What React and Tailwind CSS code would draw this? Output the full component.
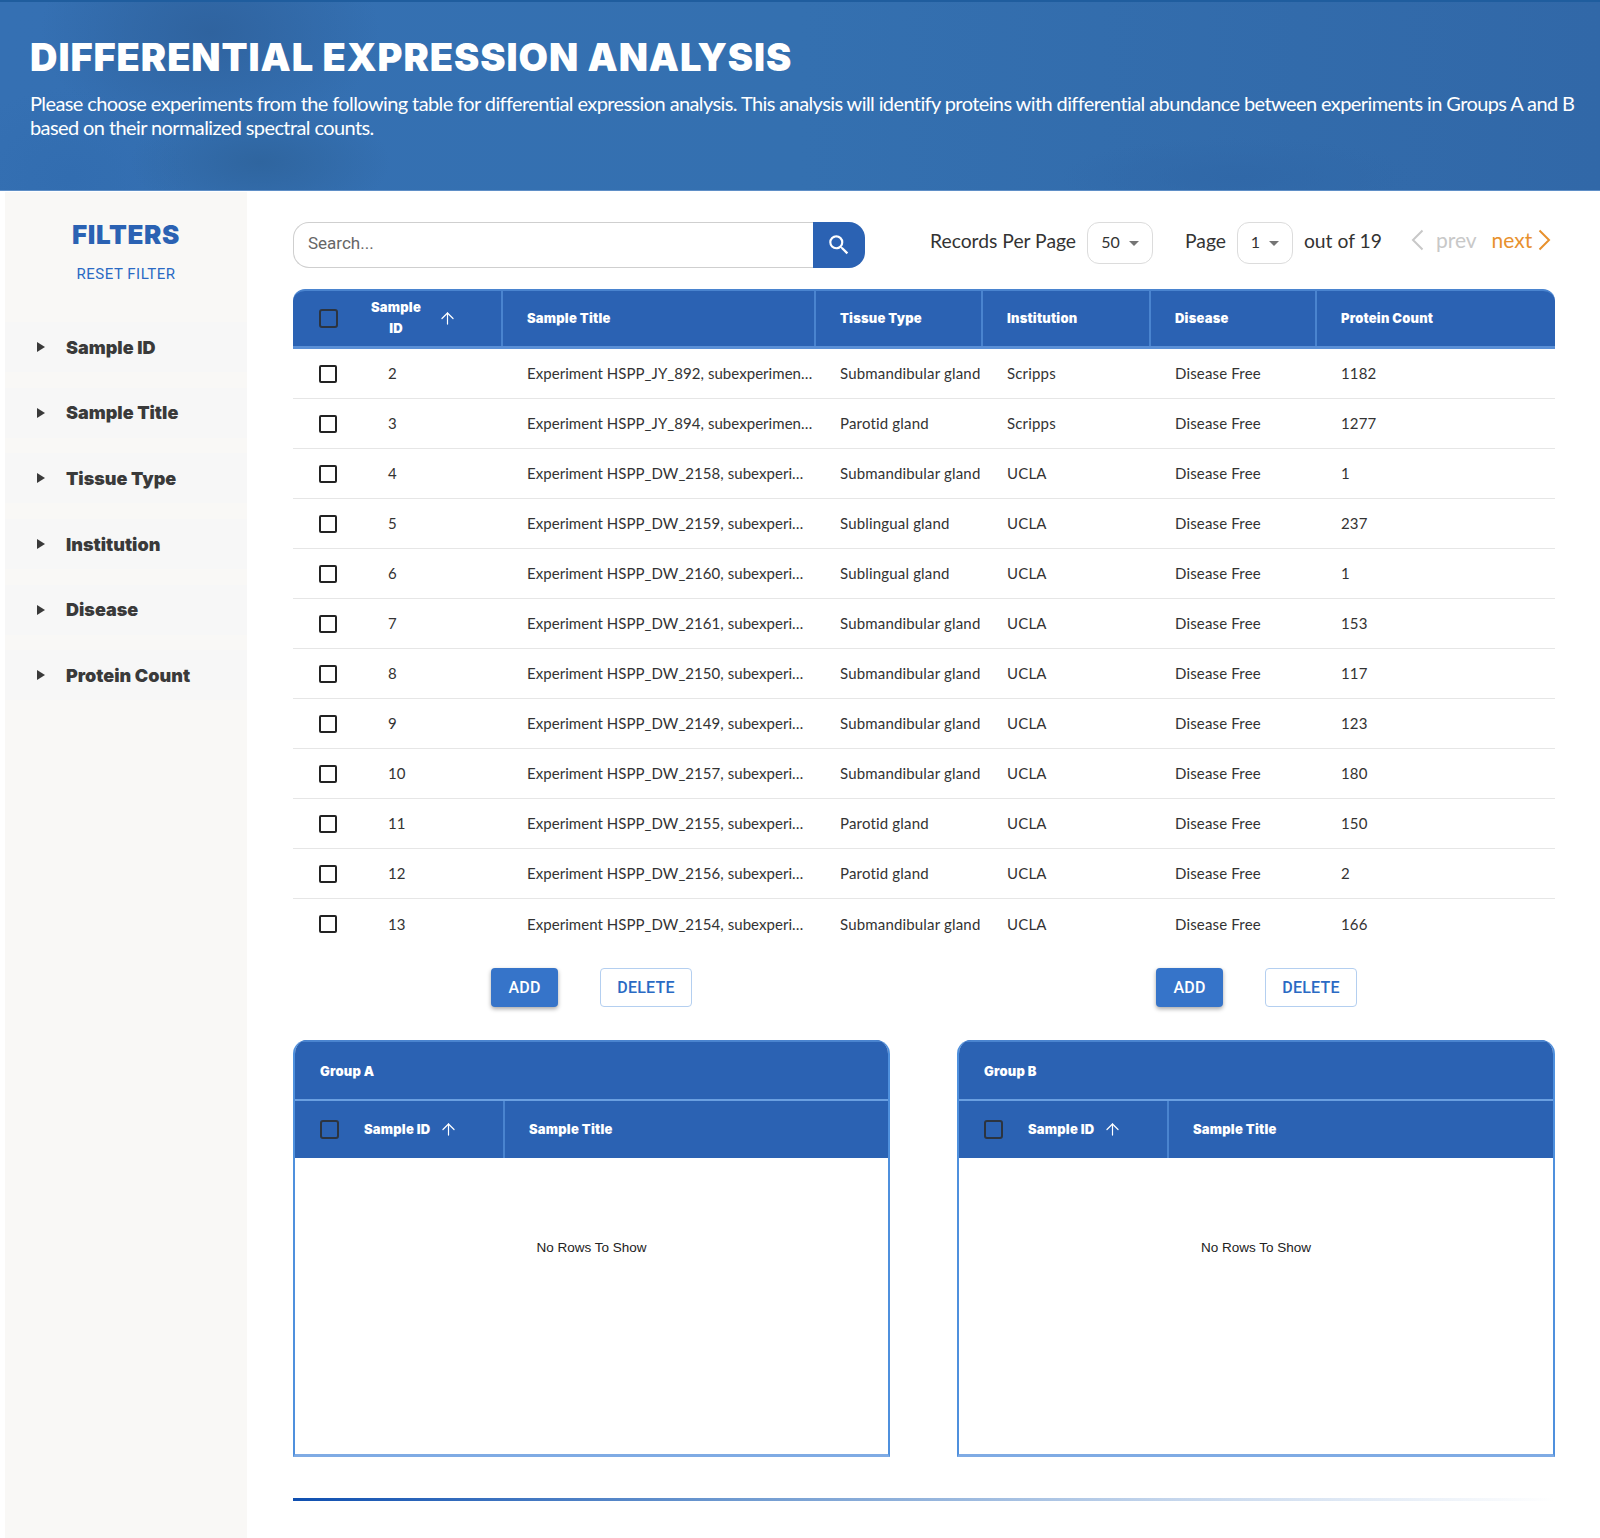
import React from "react";
import { ArrowUp } from "lucide-react";
import { MdSearch } from "react-icons/md";

const rows = [
  [2, "Experiment HSPP_JY_892, subexperimen…", "Submandibular gland", "Scripps", "1182"],
  [3, "Experiment HSPP_JY_894, subexperimen…", "Parotid gland", "Scripps", "1277"],
  [4, "Experiment HSPP_DW_2158, subexperi…", "Submandibular gland", "UCLA", "1"],
  [5, "Experiment HSPP_DW_2159, subexperi…", "Sublingual gland", "UCLA", "237"],
  [6, "Experiment HSPP_DW_2160, subexperi…", "Sublingual gland", "UCLA", "1"],
  [7, "Experiment HSPP_DW_2161, subexperi…", "Submandibular gland", "UCLA", "153"],
  [8, "Experiment HSPP_DW_2150, subexperi…", "Submandibular gland", "UCLA", "117"],
  [9, "Experiment HSPP_DW_2149, subexperi…", "Submandibular gland", "UCLA", "123"],
  [10, "Experiment HSPP_DW_2157, subexperi…", "Submandibular gland", "UCLA", "180"],
  [11, "Experiment HSPP_DW_2155, subexperi…", "Parotid gland", "UCLA", "150"],
  [12, "Experiment HSPP_DW_2156, subexperi…", "Parotid gland", "UCLA", "2"],
  [13, "Experiment HSPP_DW_2154, subexperi…", "Submandibular gland", "UCLA", "166"],
];

const filters = ["Sample ID", "Sample Title", "Tissue Type", "Institution", "Disease", "Protein Count"];
const heavy = "font-['Inter','Liberation_Sans',sans-serif] font-black";
const cols = "grid grid-cols-[208px_313px_167px_168px_166px_1fr]";

function Th({ children }) {
  return (
    <div className={`flex h-full items-center border-l-2 border-[#4a84cf] pl-[24px] text-[13px] tracking-[0.2px] text-white ${heavy}`}>
      {children}
    </div>
  );
}

function Caret() {
  return <span className="ml-[9px] mt-[2px] h-0 w-0 border-x-[5px] border-t-[5px] border-x-transparent border-t-[#757575]" />;
}

function Chevron({ left, color }) {
  return (
    <svg width="13" height="22" viewBox="0 0 13 22" fill="none" className={color}>
      <polyline
        points={left ? "11.5,1.5 2,11 11.5,20.5" : "1.5,1.5 11,11 1.5,20.5"}
        stroke="currentColor"
        strokeWidth="2"
      />
    </svg>
  );
}

function Buttons() {
  return (
    <div className="flex items-start gap-[42px] font-['Roboto',sans-serif] text-[16px] font-medium tracking-[0.2px]">
      <button className="h-[39px] w-[67px] rounded-[4px] bg-[#3674c9] text-white shadow-[0_2px_4px_rgba(0,0,0,0.35)]">ADD</button>
      <button className="h-[39px] w-[92px] rounded-[4px] border border-[#b4cff0] bg-white text-[#2a6ac4]">DELETE</button>
    </div>
  );
}

function Group({ name, width }) {
  return (
    <div className={`flex h-[417px] ${width} flex-col overflow-hidden rounded-t-[14px] border-2 border-t-0 border-b-[3px] border-x-[#4f90dd] border-b-[#7fabe4] bg-white`}>
      <div className={`flex h-[59px] shrink-0 items-center border-t-[2px] border-[#4a84cf] bg-[#2b62b3] pl-[25px] pt-[2px] text-[13px] tracking-[0.2px] text-white ${heavy}`}>
        {name}
      </div>
      <div className="grid h-[59px] shrink-0 grid-cols-[208px_1fr] border-t-2 border-[#6a9fe0] bg-[#2b62b3]">
        <div className={`flex items-center pl-[25px] text-[13px] tracking-[0.2px] text-white ${heavy}`}>
          <span className="h-[19px] w-[19px] rounded-[3px] border-2 border-[#2c3440]" />
          <span className="ml-[25px]">Sample ID</span>
          <ArrowUp className="ml-[9px]" size={19} strokeWidth={1.5} />
        </div>
        <Th>Sample Title</Th>
      </div>
      <div className="flex flex-1 items-center justify-center pb-[115px] font-['Liberation_Sans',sans-serif] text-[13.5px] text-[#222]">
        No Rows To Show
      </div>
    </div>
  );
}

export default function App() {
  return (
    <div className="h-[1538px] w-[1600px] overflow-hidden bg-white font-['Lato',sans-serif]">
      <header className="h-[191px] border-t-2 border-b border-t-[#1f5d9e] border-b-[#5f8fc7] bg-[#3470b0] bg-[radial-gradient(ellipse_170px_110px_at_210px_30px,#2f639f,transparent),radial-gradient(ellipse_130px_60px_at_260px_160px,#2f659f,transparent),radial-gradient(ellipse_120px_90px_at_70px_175px,#326db0,transparent),radial-gradient(ellipse_180px_40px_at_1240px_175px,#3068a8,transparent),linear-gradient(90deg,#3570b3,#3470b0_50%,#3168a8)] pl-[30px] pr-[20px] pt-[32px]">
        <h1 className={`whitespace-nowrap text-[38px] leading-[46px] tracking-[0.93px] text-white ${heavy}`}>DIFFERENTIAL EXPRESSION ANALYSIS</h1>
        <p className="mt-[12px] text-[20px] leading-[23.5px] tracking-[-0.6px] text-white">
          Please choose experiments from the following table for differential expression analysis. This analysis will identify proteins with differential abundance between experiments in Groups A and B based on their normalized spectral counts.
        </p>
      </header>

      <div className="flex pt-[1px]">
        <aside className="ml-[5px] h-[1346px] w-[242px] shrink-0 bg-[#f9f8f6]">
          <div className={`mt-[27px] text-center text-[26px] leading-[32px] tracking-[0.6px] text-[#2b62b3] ${heavy}`}>FILTERS</div>
          <div className="mt-[13px] text-center font-['Roboto',sans-serif] text-[15px] leading-[20px] tracking-[0.5px] text-[#2a6ac4]">RESET FILTER</div>
          <div className="mt-[38px] flex flex-col gap-[15.7px]">
            {filters.map((f) => (
              <div key={f} className="flex h-[50px] items-center bg-[#f7f7f7] pl-[32px]">
                <span className="h-0 w-0 border-y-[5px] border-l-[8px] border-y-transparent border-l-[#3a3a3a]" />
                <span className={`ml-[21px] text-[18px] text-[#3a3a3a] ${heavy}`}>{f}</span>
              </div>
            ))}
          </div>
        </aside>

        <main className="ml-[46px] w-[1262px]">
          <div className="mt-[30px] flex h-[46px] items-start whitespace-nowrap">
            <div className="flex h-[46px] w-[520px] shrink-0 items-center rounded-l-[16px] border border-r-0 border-[#cfcfcf] pb-[2px] pl-[14px] font-['Roboto',sans-serif] text-[17px] text-[#666]">Search...</div>
            <div className="flex h-[46px] w-[52px] shrink-0 items-center justify-center rounded-r-[16px] bg-[#2b62b3] text-white">
              <MdSearch size={26} />
            </div>
            <div className="ml-[65px] flex h-[42px] items-center text-[19.3px] text-[#333]">
              <span className="-mt-[4px]">Records Per Page</span>
              <span className="ml-[11px] flex h-[42px] w-[66px] items-center justify-center rounded-[12px] border border-[#dcdcdc] pb-[2px] text-[16px]">50<Caret /></span>
              <span className="ml-[32px] -mt-[4px]">Page</span>
              <span className="ml-[11px] flex h-[42px] w-[56px] items-center justify-center rounded-[12px] border border-[#dcdcdc] pb-[2px] text-[16px]">1<Caret /></span>
              <span className="ml-[11px] -mt-[4px]">out of 19</span>
              <span className="ml-[29px] -mt-[6px]"><Chevron left color="text-[#c8c8c8]" /></span>
              <span className="ml-[12px] -mt-[6px] text-[21px] text-[#c8c8c8]">prev</span>
              <span className="ml-[15px] -mt-[6px] text-[21px] text-[#e8912d]">next</span>
              <span className="ml-[6px] -mt-[6px]"><Chevron color="text-[#e8912d]" /></span>
            </div>
          </div>

          <div className={`${cols} mt-[21px] h-[60px] rounded-t-[12px] border-t-2 border-b-[3px] border-t-[#4a84cf] border-b-[#5a8fd6] bg-[#2b62b3]`}>
            <div className={`flex items-center pl-[26px] text-[13px] tracking-[0.2px] text-white ${heavy}`}>
              <span className="h-[19px] w-[19px] rounded-[3px] border-2 border-[#2c3440]" />
              <span className="ml-[33px] -mt-[2px] w-[50px] text-center leading-[21px]">Sample ID</span>
              <ArrowUp className="ml-[17px]" size={19} strokeWidth={1.5} />
            </div>
            <Th>Sample Title</Th>
            <Th>Tissue Type</Th>
            <Th>Institution</Th>
            <Th>Disease</Th>
            <Th>Protein Count</Th>
          </div>

          <div>
            {rows.map((r) => (
              <div key={r[0]} className={`${cols} h-[50px] items-center border-b border-[#e6e6e6] text-[15px] tracking-[0.17px] text-[#333] last:border-b-0`}>
                <div className="flex items-center pl-[26px]">
                  <span className="h-[18px] w-[18px] rounded-[2px] border-2 border-[#222]" />
                  <span className="ml-[51px]">{r[0]}</span>
                </div>
                <div className="whitespace-nowrap pl-[26px] tracking-[0.05px]">{r[1]}</div>
                <div className="whitespace-nowrap pl-[26px]">{r[2]}</div>
                <div className="pl-[26px]">{r[3]}</div>
                <div className="pl-[26px]">Disease Free</div>
                <div className="pl-[26px]">{r[4]}</div>
              </div>
            ))}
          </div>

          <div className="mt-[19px] flex">
            <div className="ml-[198px]"><Buttons /></div>
            <div className="ml-[464px]"><Buttons /></div>
          </div>

          <div className="mt-[33px] flex justify-between">
            <Group name="Group A" width="w-[597px]" />
            <Group name="Group B" width="w-[598px]" />
          </div>

          <div className="mt-[41px] h-[3px] bg-[linear-gradient(90deg,#0f4fb0,#6f9ad0_35%,#c5d6ec_70%,#ffffff_100%)]" />
        </main>
      </div>
    </div>
  );
}
